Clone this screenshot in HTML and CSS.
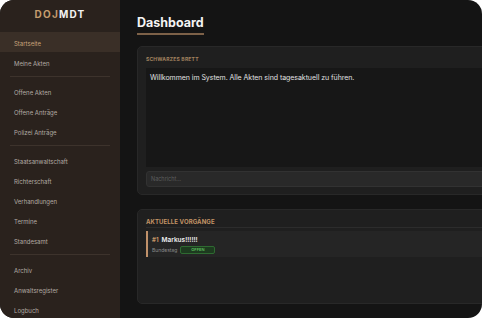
FILE: index.html
```html
<!DOCTYPE html>
<html lang="de">
<head>
<meta charset="utf-8">
<title>DOJ MDT</title>
<link rel="stylesheet" href="styles.css">
</head>
<body>
<div class="app">
  <aside class="sidebar">
    <div class="logo"><span class="logo-a">DOJ</span><span class="logo-b">MDT</span></div>
    <nav class="nav">
      <a class="nav-item active">Startseite</a>
      <a class="nav-item">Meine Akten</a>
      <div class="divider"></div>
      <a class="nav-item">Offene Akten</a>
      <a class="nav-item">Offene Anträge</a>
      <a class="nav-item">Polizei Anträge</a>
      <div class="divider"></div>
      <a class="nav-item">Staatsanwaltschaft</a>
      <a class="nav-item">Richterschaft</a>
      <a class="nav-item">Verhandlungen</a>
      <a class="nav-item">Termine</a>
      <a class="nav-item">Standesamt</a>
      <div class="divider"></div>
      <a class="nav-item">Archiv</a>
      <a class="nav-item">Anwaltsregister</a>
      <a class="nav-item">Logbuch</a>
    </nav>
  </aside>
  <main class="main">
    <div class="content">
      <header class="page-head">
        <h1 class="title">Dashboard</h1>
      </header>
      <section class="panel board">
        <div class="board-head">Schwarzes Brett</div>
        <div class="board-msg">Willkommen im System. Alle Akten sind tagesaktuell zu führen.</div>
        <div class="board-input">Nachricht...</div>
      </section>
      <section class="panel cases">
        <div class="cases-head">Aktuelle Vorgänge</div>
        <div class="case">
          <div class="case-line"><span class="case-id">#1</span><span class="case-name">Markus!!!!!!</span></div>
          <div class="case-line"><span class="case-org">Bundestag</span><span class="badge">OFFEN</span></div>
        </div>
      </section>
    </div>
  </main>
</div>
</body>
</html>
```

FILE: styles.css
```css
* { box-sizing: border-box; }
html, body { margin: 0; padding: 0; background: #ffffff; }
body { font-family: Inter, "Noto Sans", sans-serif; }

.app {
  width: 482px;
  height: 318px;
  border-radius: 14px;
  overflow: hidden;
  display: flex;
  background: #141414;
}

.sidebar {
  width: 120px;
  flex: none;
  background: #2a221d;
  display: flex;
  flex-direction: column;
  overflow: hidden;
}

.logo {
  flex: none;
  height: 32px;
  display: flex;
  align-items: center;
  justify-content: center;
  padding-bottom: 5px;
  font-size: 10px;
  font-weight: 700;
  letter-spacing: 1.2px;
}
.logo-a { color: #c49c6e; }
.logo-b { color: #f2f2f2; }

.nav { flex: none; display: flex; flex-direction: column; }
.nav-item {
  flex: none;
  height: 20px;
  display: flex;
  align-items: center;
  padding-left: 14px;
  padding-top: 2px;
  font-size: 6px;
  color: #b2aaa3;
}
.nav-item.active {
  background: #3a2f27;
  color: #c8a47c;
}
.divider {
  flex: none;
  height: 1px;
  margin: 4px 10px;
  background: #3d332c;
}

.main {
  flex: 1;
  min-width: 0;
  overflow: hidden;
}
.content {
  width: 420px;
  padding-left: 17px;
  display: flex;
  flex-direction: column;
}

.page-head { flex: none; height: 46px; padding-top: 11px; }
.title {
  display: inline-block;
  margin: 0;
  font-size: 12.5px;
  font-weight: 700;
  color: #f4f4f4;
  line-height: 19px;
  padding-bottom: 1px;
  border-bottom: 2px solid #7d6148;
}

.panel {
  flex: none;
  background: #1f1f1f;
  border: 1px solid #282828;
  border-radius: 5px;
  padding: 0 0 0 8px;
}

.board { height: 149px; display: flex; flex-direction: column; }
.board-head {
  flex: none;
  height: 21px;
  display: flex;
  align-items: center;
  padding-top: 2px;
  font-size: 5px;
  font-weight: 700;
  text-transform: uppercase;
  letter-spacing: 0.2px;
  color: #a3835f;
}
.board-msg {
  flex: none;
  height: 99px;
  background: #171717;
  padding: 5px 4px;
  font-size: 7px;
  color: #e0e0e0;
  letter-spacing: -0.05px;
}
.board-input {
  flex: none;
  margin-top: 4px;
  height: 16px;
  background: #292929;
  border: 1px solid #323232;
  border-radius: 3px;
  display: flex;
  align-items: center;
  padding-left: 4px;
  font-size: 5.5px;
  color: #5e5e5e;
}

.cases { margin-top: 14px; height: 95px; }
.cases-head {
  height: 18px;
  padding-top: 8px;
  font-size: 6px;
  line-height: 8px;
  font-weight: 700;
  text-transform: uppercase;
  letter-spacing: 0.1px;
  color: #c39466;
  border-bottom: 1px solid #2c2c2c;
}
.case {
  margin-top: 3px;
  height: 26px;
  background: #252525;
  border-left: 2px solid #c0916a;
  padding: 4px 0 0 4px;
  display: flex;
  flex-direction: column;
  gap: 1px;
}
.case-line { display: flex; align-items: center; gap: 3px; height: 9px; }
.case-id { font-size: 6px; font-weight: 700; color: #c39466; }
.case-name { font-size: 6.5px; font-weight: 600; color: #f0f0f0; }
.case-org { font-size: 5px; color: #8a8a8a; }
.badge {
  width: 35px;
  height: 8px;
  display: flex;
  align-items: center;
  justify-content: center;
  font-size: 4px;
  font-weight: 600;
  color: #5fc15f;
  background: #1d3a1f;
  border: 1px solid #2e6a31;
  border-radius: 2px;
}
```
